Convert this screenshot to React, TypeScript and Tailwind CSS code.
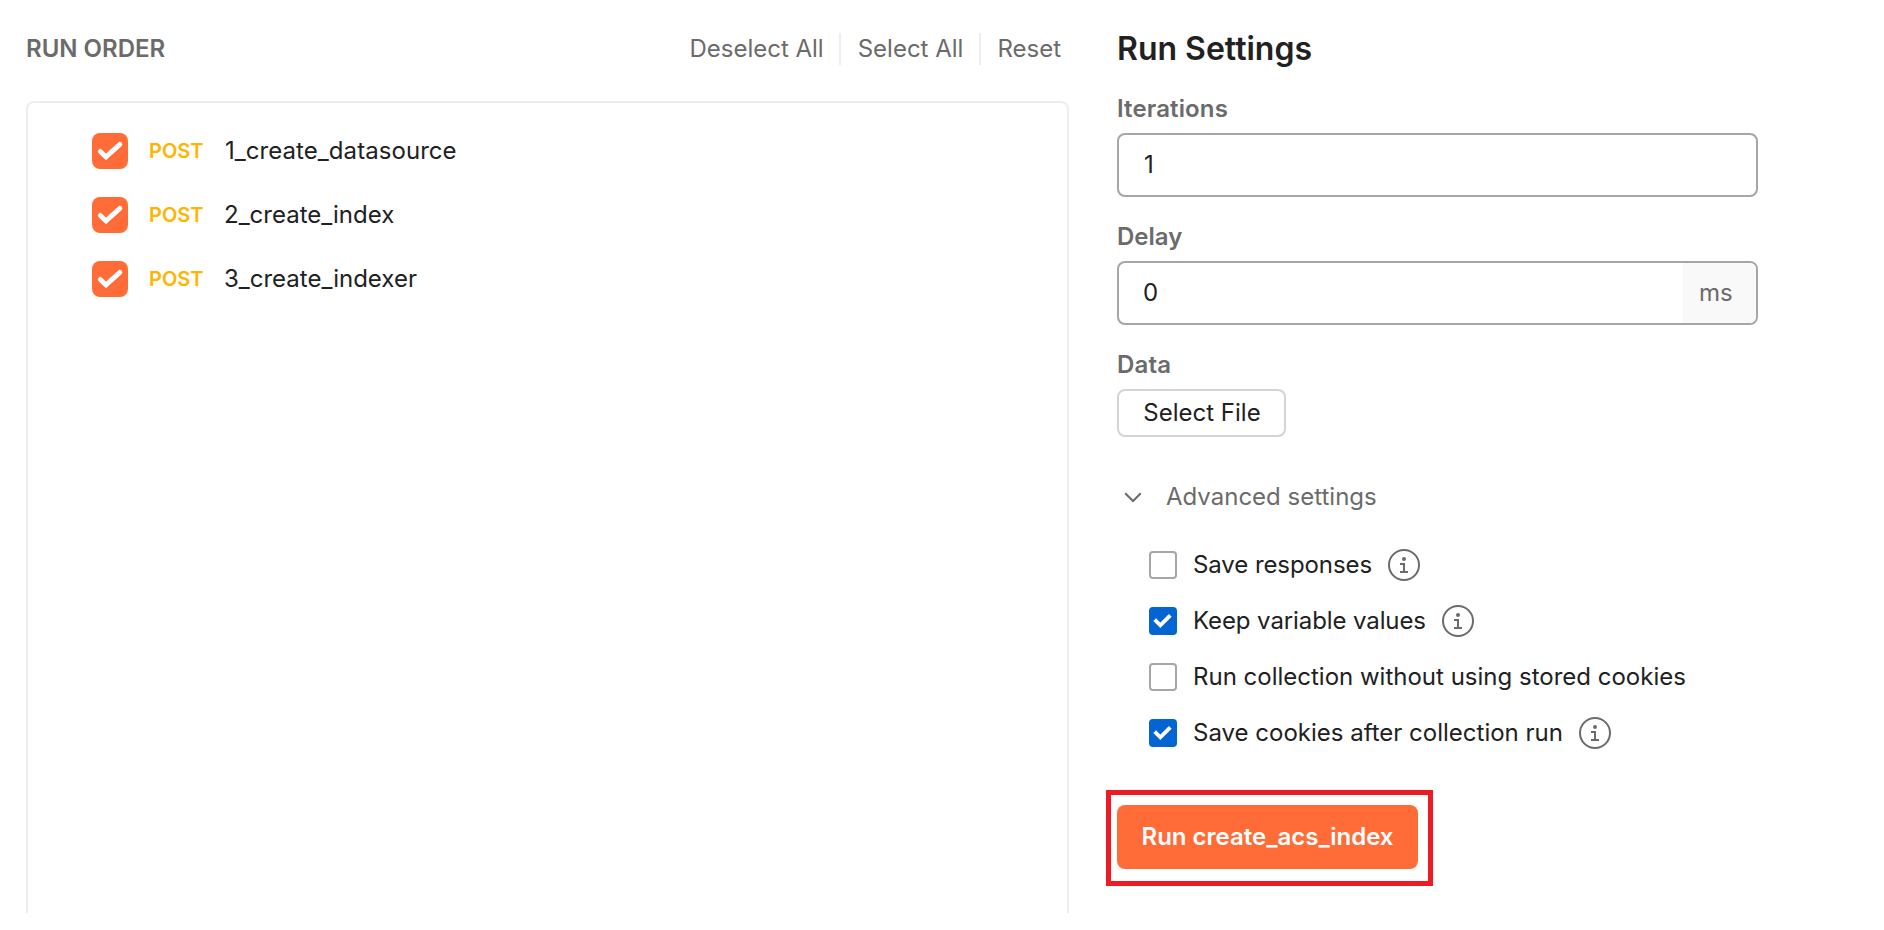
import React from "react";

const requests = [
  { name: "1_create_datasource", spacing: "pl-px tracking-[0.06px]" },
  { name: "2_create_index", spacing: "" },
  { name: "3_create_indexer", spacing: "" },
];

const options = [
  { label: "Save responses", checked: false, info: true, tracking: "tracking-[-0.08px]" },
  { label: "Keep variable values", checked: true, info: true, tracking: "tracking-[-0.1px]" },
  { label: "Run collection without using stored cookies", checked: false, info: false, tracking: "" },
  { label: "Save cookies after collection run", checked: true, info: true, tracking: "" },
];

function OrangeCheck() {
  return (
    <svg className="h-9 w-9 shrink-0" viewBox="0 0 36 36" fill="none">
      <rect width="36" height="36" rx="8" fill="#ff6c37" />
      <path d="M8.3 18.4 L14 23.9 L27.9 11.4" stroke="#fff" strokeWidth="4.8" strokeLinecap="round" />
    </svg>
  );
}

function Checkbox({ checked }: { checked: boolean }) {
  return (
    <svg className="h-7 w-7 shrink-0" viewBox="0 0 28 28" fill="none">
      {checked ? (
        <>
          <rect width="28" height="28" rx="4" fill="#0265d2" />
          <path d="M5.7 12.7 L11.3 18.3 L21.3 8.3" stroke="#fff" strokeWidth="3.8" />
        </>
      ) : (
        <rect x="1" y="1" width="26" height="26" rx="3" stroke="#a6a6a6" strokeWidth="2" />
      )}
    </svg>
  );
}

function InfoIcon() {
  return (
    <svg className="ml-4 h-8 w-8 shrink-0" viewBox="0 0 32 32" fill="none">
      <circle cx="16" cy="16" r="15" stroke="#6b6b6b" strokeWidth="2" />
      <circle cx="16" cy="10" r="2" fill="#6b6b6b" />
      <path d="M12 15 H16 V23 M12 23 H20" stroke="#6b6b6b" strokeWidth="2" />
    </svg>
  );
}

export default function App() {
  return (
    <div className="flex h-[913px] w-[1884px] overflow-hidden bg-white pl-[26px] font-['Inter',sans-serif] text-2xl leading-8 text-[#212121]">
      <section className="flex w-[1043px] flex-col">
        <header className="mt-[33px] mb-9 flex h-8 items-center justify-between text-[#6b6b6b]">
          <h2 className="font-semibold">RUN ORDER</h2>
          <div className="flex pr-2">
            <button className="border-r-2 border-[#ededed] pr-[15px]">Deselect All</button>
            <button className="border-r-2 border-[#ededed] pr-4 pl-[17px]">Select All</button>
            <button className="pl-4">Reset</button>
          </div>
        </header>
        <ul className="flex flex-1 flex-col gap-7 rounded-t-lg border-2 border-b-0 border-[#ededed] pt-[30px] pl-16">
          {requests.map((r) => (
            <li key={r.name} className="flex h-9 items-center">
              <OrangeCheck />
              <span className="ml-[21px] w-[75px] text-xl font-semibold text-[#ffb400]">POST</span>
              <span className={r.spacing}>{r.name}</span>
            </li>
          ))}
        </ul>
      </section>

      <section className="ml-12 flex w-[641px] shrink-0 flex-col items-start">
        <h1 className="mt-[29px] text-[32px] leading-10 font-semibold">Run Settings</h1>
        <label className="mt-6 font-semibold tracking-[0.12px] text-[#6b6b6b]">Iterations</label>
        <div className="mt-2 flex h-16 w-full items-center rounded-lg border-2 border-[#a6a6a6] px-[25px]">1</div>
        <label className="mt-6 font-semibold text-[#6b6b6b]">Delay</label>
        <div className="mt-2 flex h-16 w-full items-center justify-between overflow-hidden rounded-lg border-2 border-[#a6a6a6] pl-6">
          <span>0</span>
          <span className="flex h-full w-[73px] items-center bg-[#f9f9f9] pl-4 text-[#6b6b6b]">ms</span>
        </div>
        <label className="mt-6 font-semibold tracking-[0.2px] text-[#6b6b6b]">Data</label>
        <button className="mt-2 h-12 w-[169px] rounded-lg border-2 border-[#d4d4d4] pl-px text-center">Select File</button>

        <div className="mt-11 flex h-8 items-center text-[#6b6b6b]">
          <svg className="ml-[7px] h-3 w-[18px]" viewBox="0 0 18 12" fill="none">
            <path d="M1.2 2.2 L9 10 L16.8 2.2" stroke="#6b6b6b" strokeWidth="2" />
          </svg>
          <span className="ml-6">Advanced settings</span>
        </div>

        <div className="mt-9 flex flex-col gap-6 pl-8">
          {options.map((o) => (
            <div key={o.label} className="flex h-8 items-center">
              <Checkbox checked={o.checked} />
              <span className={`ml-4 ${o.tracking}`}>{o.label}</span>
              {o.info && <InfoIcon />}
            </div>
          ))}
        </div>

        <div className="mt-[41px] -ml-[11px] h-24 w-[327px] border-5 border-[#ed1c24] pt-2.5 pl-1.5">
          <button className="h-16 w-[301px] rounded-lg bg-[#ff6c37] font-semibold text-white">Run create_acs_index</button>
        </div>
      </section>
    </div>
  );
}
